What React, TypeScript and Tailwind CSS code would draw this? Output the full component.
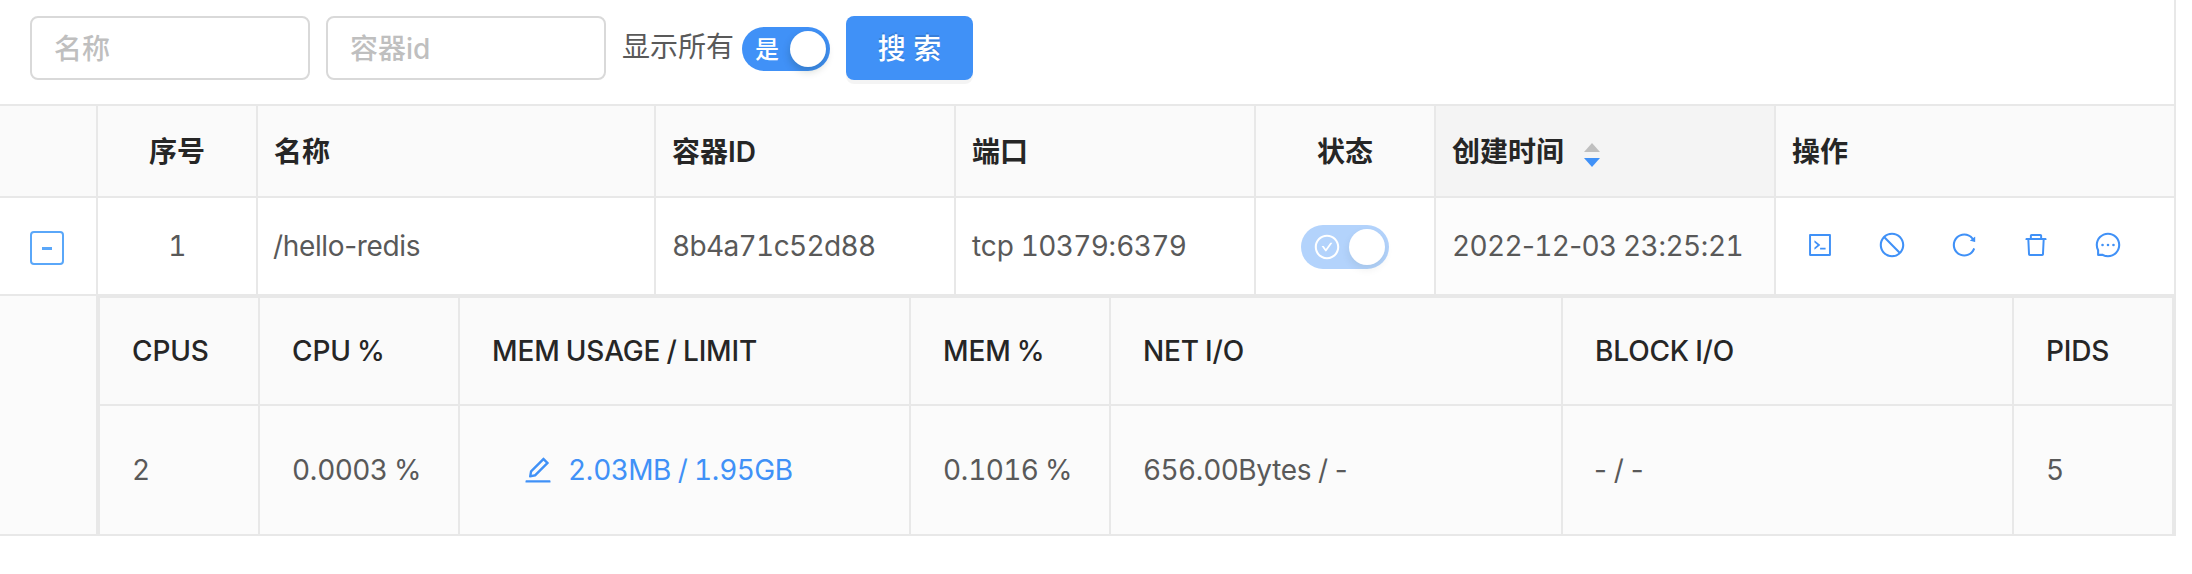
import React from "react";
import {
  AiOutlineCheckCircle,
  AiOutlineCode,
  AiOutlineDelete,
  AiOutlineEdit,
  AiOutlineMessage,
  AiOutlineReload,
  AiOutlineStop,
} from "react-icons/ai";

const line = "border-[#e8e8e8]";
const head = `flex items-center border-r-2 border-b-2 ${line} bg-[#fafafa] pt-px font-semibold text-[#262626]`;
const cell = `flex items-center border-r-2 border-b-2 ${line}`;
const statHead = `flex items-center border-r-2 border-b-2 ${line} bg-[#fafafa] pl-8 font-medium tracking-[-0.15px] [word-spacing:-1.1px] text-[#262626]`;
const statCell = `flex items-center border-r-2 ${line}`;
const field =
  "h-16 w-[280px] rounded-lg border-2 border-[#d9d9d9] bg-white px-[22px] pt-[2px] font-medium placeholder:text-[#bfbfbf]";

const actions = [AiOutlineCode, AiOutlineStop, AiOutlineReload, AiOutlineDelete, AiOutlineMessage];

function Value({ text, className = "tracking-[-0.3px]" }: { text: string; className?: string }) {
  return (
    <span className={`[word-spacing:-0.8px] ${className}`}>
      {text.split(/(\d+)/).map((part, i) =>
        i % 2 ? (
          <span key={i} className="tracking-[-0.65px] tabular-nums">
            {part}
          </span>
        ) : (
          part
        ),
      )}
    </span>
  );
}

function SortIcon() {
  return (
    <svg className="ml-5 mt-[6px] h-6 w-4" viewBox="0 0 16 24">
      <path d="M8 0 L16 9 H0 Z" fill="#bfbfbf" />
      <path d="M0 15 H16 L8 24 Z" fill="#4091f7" />
    </svg>
  );
}

function Toolbar() {
  return (
    <div className={`flex h-[106px] items-start border-b-2 ${line} pt-4 pl-[30px]`}>
      <input className={field} placeholder="名称" />
      <input className={`${field} ml-4`} placeholder="容器id" />
      <span className="mt-[9px] ml-4 w-[120px]">显示所有</span>
      <button className="mt-[11px] flex h-11 w-[88px] items-center rounded-full bg-[#4091f7] pr-1 pl-[13px] text-2xl leading-none font-medium text-white">
        <span className="pt-[2px]">是</span>
        <span className="ml-auto size-9 rounded-full bg-white shadow-[0_4px_8px_rgba(0,35,11,0.2)]" />
      </button>
      <button className="ml-4 flex h-16 w-[127px] items-center justify-center rounded-lg bg-[#4091f7] pt-px font-medium text-white shadow-[0_4px_0_rgba(0,0,0,0.045)] [text-shadow:0_-2px_0_rgba(0,0,0,0.12)]">
        搜 索
      </button>
    </div>
  );
}

export default function App() {
  return (
    <div className="h-[574px] w-[2192px] overflow-hidden bg-white font-[Inter,'Noto_Sans_CJK_SC',sans-serif] text-[28px] leading-[44px] text-[#595959]">
      <div className={`w-[2176px] border-r-2 ${line}`}>
        <Toolbar />
      </div>

      <div className="grid w-[2176px] grid-cols-[98px_160px_398px_300px_300px_180px_340px_400px] grid-rows-[92px_98px]">
        <div className={head} />
        <div className={`${head} justify-center`}>序号</div>
        <div className={`${head} pl-4`}>名称</div>
        <div className={`${head} pl-4`}>容器ID</div>
        <div className={`${head} pl-4`}>端口</div>
        <div className={`${head} justify-center`}>状态</div>
        <div className="flex items-center border-r-2 border-b-2 border-[#e8e8e8] bg-[#f4f4f4] pt-px pl-4 font-semibold text-[#262626]">
          创建时间
          <SortIcon />
        </div>
        <div className={`${head} pl-4`}>操作</div>

        <div className={`${cell} pl-[30px]`}>
          <button className="mt-1 flex size-[34px] items-center justify-center rounded border-2 border-[#5aa7f9]">
            <span className="h-[3px] w-[10px] bg-[#5aa7f9]" />
          </button>
        </div>
        <div className={`${cell} justify-center`}>
          <Value text="1" />
        </div>
        <div className={`${cell} pl-[15px]`}>
          <Value text="/hello-redis" className="tracking-[-0.35px]" />
        </div>
        <div className={`${cell} pl-4`}>
          <Value text="8b4a71c52d88" className="tracking-[-0.65px]" />
        </div>
        <div className={`${cell} pl-4`}>
          <Value text="tcp 10379:6379" className="tracking-[-0.1px]" />
        </div>
        <div className={`${cell} justify-center`}>
          <div className="mt-[2px] flex h-11 w-[88px] items-center rounded-full bg-[#b3d3fc] pr-1 pl-3">
            <AiOutlineCheckCircle className="size-7 text-white" />
            <span className="ml-auto size-9 rounded-full bg-white shadow-[0_4px_8px_rgba(0,35,11,0.08)]" />
          </div>
        </div>
        <div className={`${cell} bg-[#fcfcfc] pl-4`}>
          <Value text="2022-12-03 23:25:21" className="tracking-[-0.6px]" />
        </div>
        <div className={`${cell} gap-11 pb-[2px] pl-[30px]`}>
          {actions.map((Icon, i) => (
            <Icon key={i} className="size-7 text-[#4091f7]" />
          ))}
        </div>
      </div>

      <div className={`flex h-[240px] w-[2176px] border-b-2 ${line} bg-[#fbfbfb]`}>
        <div className={`w-[98px] border-r-2 ${line}`} />
        <div className={`grid w-[2078px] grid-cols-[160px_200px_451px_200px_452px_451px_160px] grid-rows-[108px_128px] border-t-2 border-r-2 border-l-2 ${line}`}>
          <div className={statHead}>CPUS</div>
          <div className={statHead}>CPU %</div>
          <div className={statHead}>MEM USAGE / LIMIT</div>
          <div className={statHead}>MEM %</div>
          <div className={statHead}>NET I/O</div>
          <div className={statHead}>BLOCK I/O</div>
          <div className={statHead}>PIDS</div>
          <div className={`${statCell} pl-8`}>
            <Value text="2" />
          </div>
          <div className={`${statCell} pl-8`}>
            <Value text="0.0003 %" />
          </div>
          <div className={`${statCell} pl-[62px] text-[#4091f7]`}>
            <AiOutlineEdit className="mr-[14px] size-8" />
            <Value text="2.03MB / 1.95GB" className="tracking-[-0.4px]" />
          </div>
          <div className={`${statCell} pl-8`}>
            <Value text="0.1016 %" />
          </div>
          <div className={`${statCell} pl-8`}>
            <Value text="656.00Bytes / -" />
          </div>
          <div className={`${statCell} pl-[31px]`}>
            <Value text="- / -" className="tracking-[-0.1px]" />
          </div>
          <div className={`${statCell} pl-8`}>
            <Value text="5" />
          </div>
        </div>
      </div>
    </div>
  );
}
